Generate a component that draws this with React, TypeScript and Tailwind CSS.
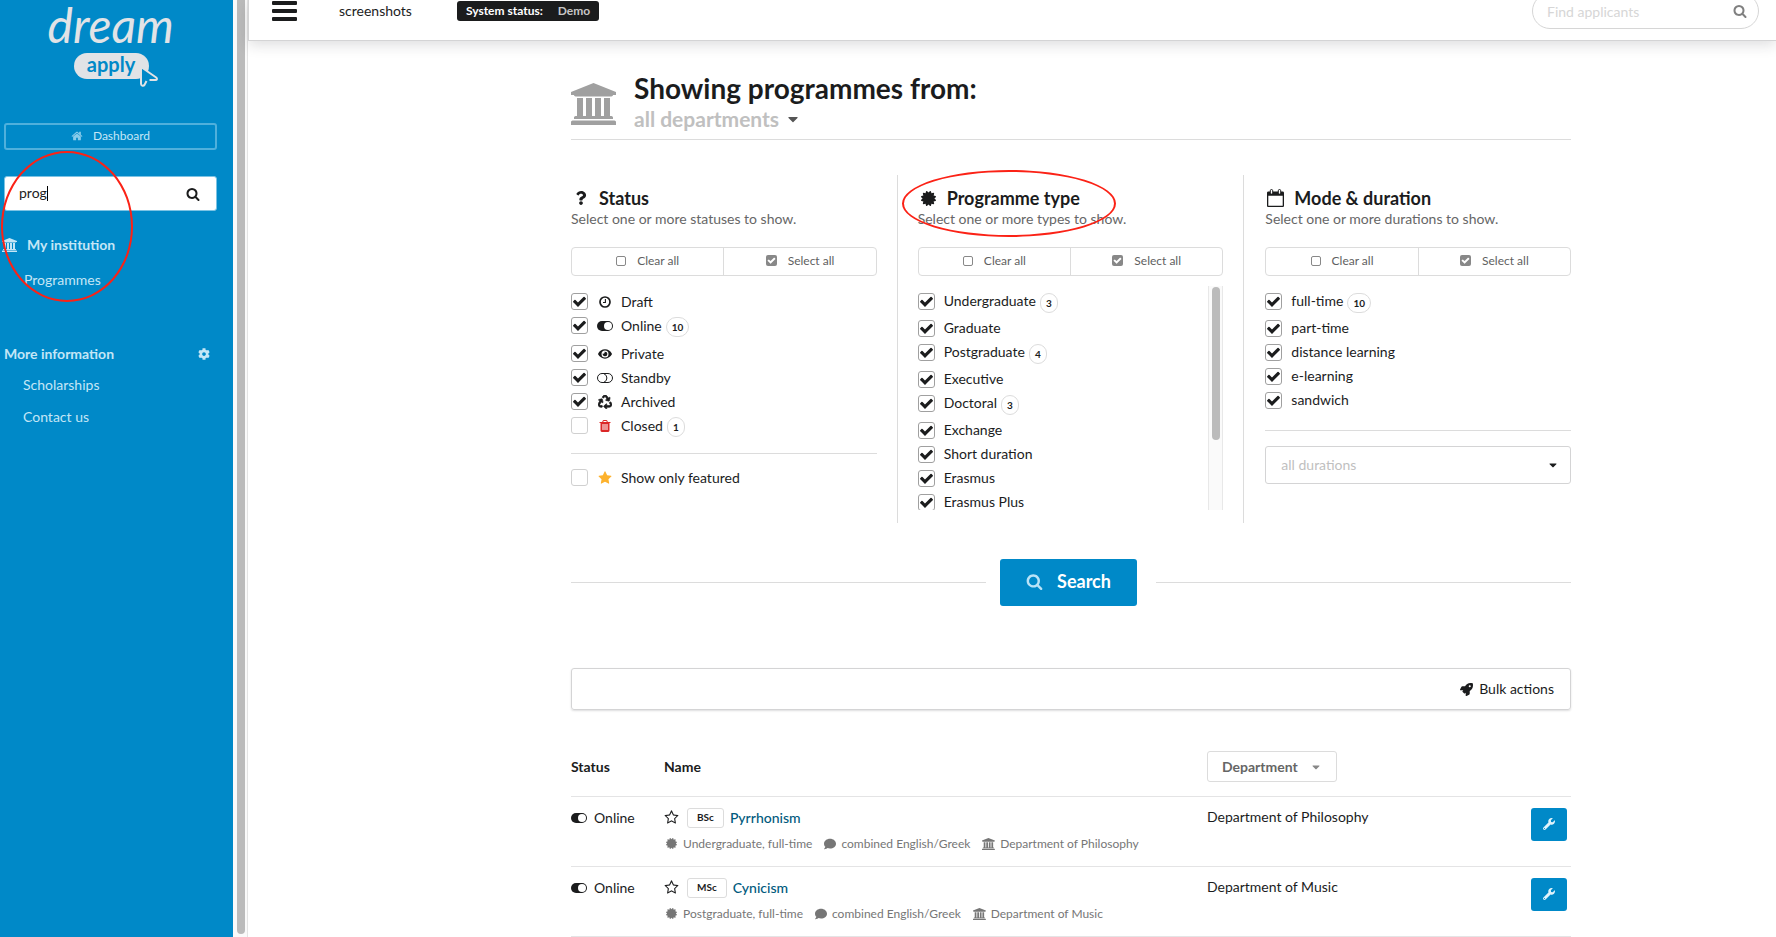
import type { ReactNode } from 'react'
import {
  FaCaretDown,
  FaCertificate,
  FaCog,
  FaComment,
  FaEye,
  FaQuestion,
  FaRecycle,
  FaRocket,
  FaWrench,
} from 'react-icons/fa'

interface IconProps {
  className?: string
}

interface Option {
  label: string
  checked: boolean
  count?: number
  icon?: ReactNode
}

function SearchIcon({ className }: IconProps) {
  return (
    <svg viewBox="0 0 1792 1792" fill="currentColor" className={className} aria-hidden="true">
      <path d="M1216 832q0-185-131.5-316.5t-316.5-131.5-316.5 131.5-131.5 316.5 131.5 316.5 316.5 131.5 316.5-131.5 131.5-316.5zm512 832q0 52-38 90t-90 38q-54 0-90-38l-343-342q-179 124-399 124-143 0-273.5-55.5t-225-150-150-225-55.5-273.5 55.5-273.5 150-225 225-150 273.5-55.5 273.5 55.5 225 150 150 225 55.5 273.5q0 220-124 399l343 343q37 37 37 90z" />
    </svg>
  )
}

function CheckIcon({ className }: IconProps) {
  return (
    <svg viewBox="0 0 1792 1792" fill="currentColor" className={className} aria-hidden="true">
      <path d="M1671 566q0 40-28 68l-724 724-136 136q-28 28-68 28t-68-28l-136-136-362-362q-28-28-28-68t28-68l136-136q28-28 68-28t68 28l294 295 656-657q28-28 68-28t68 28l136 136q28 28 28 68z" />
    </svg>
  )
}

function UniversityIcon({ className }: IconProps) {
  return (
    <svg viewBox="0 0 1920 1792" fill="currentColor" className={className} aria-hidden="true">
      <path d="M960 0l960 384v128h-128q0 26-20.5 45t-48.5 19h-1526q-28 0-48.5-19t-20.5-45h-128v-128zm-704 640h256v768h128v-768h256v768h128v-768h256v768h128v-768h256v768h59q28 0 48.5 19t20.5 45v64h-1664v-64q0-26 20.5-45t48.5-19h59v-768zm1595 960q28 0 48.5 19t20.5 45v128h-1920v-128q0-26 20.5-45t48.5-19h1782z" />
    </svg>
  )
}

function HomeIcon({ className }: IconProps) {
  return (
    <svg viewBox="0 0 1792 1792" fill="currentColor" className={className} aria-hidden="true">
      <path d="M1472 992v480q0 26-19 45t-45 19h-384v-384h-256v384h-384q-26 0-45-19t-19-45v-480q0-1 .5-3t.5-3l575-474 575 474q1 2 1 6zm223-69l-62 74q-8 9-21 11h-3q-13 0-21-7l-692-577-692 577q-12 8-24 7-13-2-21-11l-62-74q-8-10-7-23.5t11-21.5l719-599q32-26 76-26t76 26l244 204v-195q0-14 9-23t23-9h192q14 0 23 9t9 23v408l219 182q10 8 11 21.5t-7 23.5z" />
    </svg>
  )
}

function StarIcon({ className }: IconProps) {
  return (
    <svg viewBox="0 0 1792 1792" fill="currentColor" className={className} aria-hidden="true">
      <path d="M1728 647q0 22-26 48l-363 354 86 500q1 7 1 20 0 21-10.5 35.5t-30.5 14.5q-19 0-40-12l-449-236-449 236q-22 12-40 12-21 0-31.5-14.5t-10.5-35.5q0-6 2-20l86-500-364-354q-25-27-25-48 0-37 56-46l502-73 225-455q19-41 49-41t49 41l225 455 502 73q56 9 56 46z" />
    </svg>
  )
}

function StarOutlineIcon({ className }: IconProps) {
  return (
    <svg viewBox="0 0 1792 1792" fill="currentColor" className={className} aria-hidden="true">
      <path d="M1201 1004l306-297-422-62-189-382-189 382-422 62 306 297-73 421 378-199 377 199zm527-357q0 22-26 48l-363 354 86 500q1 7 1 20 0 50-41 50-19 0-40-12l-449-236-449 236q-22 12-40 12-21 0-31.5-14.5t-10.5-35.5q0-6 2-20l86-500-364-354q-25-27-25-48 0-37 56-46l502-73 225-455q19-41 49-41t49 41l225 455 502 73q56 9 56 46z" />
    </svg>
  )
}

function TrashIcon({ className }: IconProps) {
  return (
    <svg viewBox="0 0 1792 1792" fill="currentColor" className={className} aria-hidden="true">
      <path d="M704 1376v-704q0-14-9-23t-23-9h-64q-14 0-23 9t-9 23v704q0 14 9 23t23 9h64q14 0 23-9t9-23zm256 0v-704q0-14-9-23t-23-9h-64q-14 0-23 9t-9 23v704q0 14 9 23t23 9h64q14 0 23-9t9-23zm256 0v-704q0-14-9-23t-23-9h-64q-14 0-23 9t-9 23v704q0 14 9 23t23 9h64q14 0 23-9t9-23zm-544-992h448l-48-117q-7-9-17-11h-317q-10 2-17 11zm928 32v64q0 14-9 23t-23 9h-96v948q0 83-47 143.5t-113 60.5h-832q-66 0-113-58.5t-47-141.5v-952h-96q-14 0-23-9t-9-23v-64q0-14 9-23t23-9h309l70-167q15-37 54-63t79-26h320q40 0 79 26t54 63l70 167h309q14 0 23 9t9 23z" />
    </svg>
  )
}

function ClockIcon({ className }: IconProps) {
  return (
    <svg viewBox="0 0 12 12" fill="none" stroke="currentColor" className={className} aria-hidden="true">
      <circle cx="6" cy="6" r="5" strokeWidth="1.7" />
      <path d="M6.4 3v3.5H4" strokeWidth="1.1" />
    </svg>
  )
}

function ToggleOnIcon({ className }: IconProps) {
  return (
    <svg viewBox="0 0 16 10" className={className} aria-hidden="true">
      <rect width="16" height="10" rx="5" fill="currentColor" />
      <circle cx="11" cy="5" r="4" fill="white" />
    </svg>
  )
}

function ToggleOffIcon({ className }: IconProps) {
  return (
    <svg viewBox="0 0 16 10" fill="none" stroke="currentColor" className={className} aria-hidden="true">
      <rect x=".5" y=".5" width="15" height="9" rx="4.5" />
      <path d="M7 .8a4.5 4.5 0 0 1 0 8.4" />
    </svg>
  )
}

function CalendarIcon({ className }: IconProps) {
  return (
    <svg viewBox="0 0 17 18" className={className} aria-hidden="true">
      <path
        fill="currentColor"
        fillRule="evenodd"
        d="M1.3 2.6h14.4c.7 0 1.3.6 1.3 1.3v12.8c0 .7-.6 1.3-1.3 1.3H1.3C.6 18 0 17.4 0 16.7V3.9c0-.7.6-1.3 1.3-1.3zM1.3 6.8v9.9h14.4V6.8z"
      />
      <rect x="3.3" y=".5" width="2.4" height="4.6" rx="1.2" fill="white" stroke="currentColor" />
      <rect x="11.3" y=".5" width="2.4" height="4.6" rx="1.2" fill="white" stroke="currentColor" />
    </svg>
  )
}

const statuses: Option[] = [
  { label: 'Draft', checked: true, icon: <ClockIcon className="size-3" /> },
  { label: 'Online', checked: true, count: 10, icon: <ToggleOnIcon className="w-4" /> },
  { label: 'Private', checked: true, icon: <FaEye className="size-3.5" /> },
  { label: 'Standby', checked: true, icon: <ToggleOffIcon className="w-4" /> },
  { label: 'Archived', checked: true, icon: <FaRecycle className="size-3.5 stroke-current stroke-[24px]" /> },
  { label: 'Closed', checked: false, count: 1, icon: <TrashIcon className="size-3.5 text-[#db2828]" /> },
]

const programmeTypes: Option[] = [
  { label: 'Undergraduate', checked: true, count: 3 },
  { label: 'Graduate', checked: true },
  { label: 'Postgraduate', checked: true, count: 4 },
  { label: 'Executive', checked: true },
  { label: 'Doctoral', checked: true, count: 3 },
  { label: 'Exchange', checked: true },
  { label: 'Short duration', checked: true },
  { label: 'Erasmus', checked: true },
  { label: 'Erasmus Plus', checked: true },
]

const modes: Option[] = [
  { label: 'full-time', checked: true, count: 10 },
  { label: 'part-time', checked: true },
  { label: 'distance learning', checked: true },
  { label: 'e-learning', checked: true },
  { label: 'sandwich', checked: true },
]

const programmes = [
  {
    name: 'Pyrrhonism',
    degree: 'BSc',
    type: 'Undergraduate, full-time',
    language: 'combined English/Greek',
    department: 'Department of Philosophy',
  },
  {
    name: 'Cynicism',
    degree: 'MSc',
    type: 'Postgraduate, full-time',
    language: 'combined English/Greek',
    department: 'Department of Music',
  },
]

function Checkbox({ label, checked, count, icon }: Option) {
  const badgeHeight = icon ? 'h-7' : 'h-[27px]'

  return (
    <label
      className={`flex items-start text-sm ${icon ? 'leading-[17px]' : 'leading-[15px]'} ${
        count ? badgeHeight : 'h-6'
      }`}
    >
      <span className="relative mr-[9px] size-[17px] shrink-0">
        <input
          type="checkbox"
          defaultChecked={checked}
          className="peer block size-[17px] appearance-none rounded-[3px] border border-[#d0d0d0] bg-white checked:border-[#a0a0a0]"
        />
        <CheckIcon className="pointer-events-none absolute inset-0 m-auto hidden size-[15px] peer-checked:block" />
      </span>
      {icon && <span className="mr-2 flex h-[17px] w-4 shrink-0 items-center justify-center">{icon}</span>}
      <span>{label}</span>
      {count && (
        <span className="ml-1 flex h-5 min-w-[18px] items-center justify-center rounded-full border border-[#dcdcdc] px-[5px] text-[10px] font-bold">
          {count}
        </span>
      )}
    </label>
  )
}

function ColumnHeader({ icon, title, text }: { icon: ReactNode; title: string; text: string }) {
  return (
    <>
      <h2 className="flex items-center gap-2 text-lg leading-[22px] font-bold">
        {icon}
        {title}
      </h2>
      <p className="text-sm leading-5 text-[#666]">{text}</p>
      <div className="mt-[18px] flex h-[29px] rounded-sm border border-[#dcdcdc] text-xs text-[#5f5f5f]">
        <button
          type="button"
          className="flex flex-1 items-center justify-center gap-[11px] border-r border-[#dcdcdc] pb-0.5"
        >
          <span className="size-[10px] rounded-[2px] border border-[#888]" />
          Clear all
        </button>
        <button type="button" className="flex flex-1 items-center justify-center gap-[11px] pb-0.5">
          <span className="flex size-[11px] items-center justify-center rounded-[2px] bg-[#888] text-white">
            <CheckIcon className="size-[9px]" />
          </span>
          Select all
        </button>
      </div>
    </>
  )
}

function Sidebar() {
  return (
    <aside className="relative w-[233px] shrink-0 bg-[#0089c8] pr-4 pl-1 text-sm text-[#c4e6f6]">
      {/* Logo */}
      <div className="relative mx-auto h-[123px] w-[126px] text-[#e1e3e6]">
        <p className="text-center text-5xl leading-[50px] italic">dream</p>
        <p className="mt-[3px] ml-[26px] flex h-[26px] w-[75px] items-center justify-center rounded-full bg-[#e1e3e6] pb-1 text-xl leading-5 font-bold text-[#0089c8]">
          apply
        </p>
        <svg viewBox="0 0 20 23" className="absolute top-[65px] left-[91px] w-5" aria-hidden="true">
          <path d="M2 2l15 10c1.5 1 1 2.5-.5 2.5H10L6 19.5C5 21.5 2.5 21 2.2 19z" fill="#0089c8" />
          <path
            d="M10.5 15H16.5c1.6 0 2-1.5.7-2.5L2 2v17c.2 2 2.5 2.5 3.5.9L7.5 16"
            fill="none"
            stroke="#e1e3e6"
            strokeWidth="2"
            strokeLinejoin="round"
          />
        </svg>
      </div>

      <a
        href="#dashboard"
        className="flex h-[27px] items-center justify-center gap-2.5 rounded-[3px] border-2 border-[#4fb0dc] pb-0.5 text-xs"
      >
        <HomeIcon className="size-3 text-[#8accea]" />
        Dashboard
      </a>

      <div className="relative mt-[26px]">
        <input
          type="text"
          aria-label="Search menu"
          defaultValue="prog"
          className="block h-[35px] w-full rounded-[3px] border border-[#7cc3e4] bg-white px-3.5 pb-0.5 text-sm text-[#222] outline-none"
        />
        <span className="absolute top-2.5 left-[43px] h-[15px] w-px bg-black" />
        <SearchIcon className="absolute top-[11px] right-[17px] size-3.5 text-[#1b1c1d]" />
      </div>

      {/* Menu */}
      <nav>
        <p className="mt-6 -ml-0.5 flex h-5 items-center gap-2.5 font-bold">
          <UniversityIcon className="h-3.5" />
          My institution
        </p>
        <a href="#programmes" className="mt-[15px] ml-5 block leading-5">
          Programmes
        </a>
        <p className="mt-[54px] flex h-5 items-center justify-between pr-[7px] font-bold">
          More information
          <FaCog className="size-3" />
        </p>
        <a href="#scholarships" className="mt-[11px] ml-[19px] block leading-5">
          Scholarships
        </a>
        <a href="#contact" className="mt-3 ml-[19px] block leading-5">
          Contact us
        </a>
      </nav>

      <span className="pointer-events-none absolute top-[151px] left-[1px] h-[151px] w-[132px] rounded-[50%] border-2 border-[#fb2216]" />
    </aside>
  )
}

function Header() {
  return (
    <header className="flex h-[41px] items-center border-b border-l border-[#d4d4d5] bg-white pr-[17px] pb-[18px] pl-[23px] shadow-[0_4px_14px_rgba(34,36,38,0.15)]">
      <button type="button" aria-label="Toggle menu" className="flex w-[25px] flex-col gap-1">
        <span className="h-1 w-full rounded-[1px] bg-[#1b1c1d]" />
        <span className="h-1 w-full rounded-[1px] bg-[#1b1c1d]" />
        <span className="h-1 w-full rounded-[1px] bg-[#1b1c1d]" />
      </button>
      <span className="ml-[42px] text-sm">screenshots</span>
      <p className="ml-[45px] flex h-5 items-center gap-[15px] rounded-[3px] bg-[#1b1c1d] px-[9px] text-xs font-bold text-white">
        System status: <span className="text-[#c6c6c6]">Demo</span>
      </p>
      <div className="relative ml-auto">
        <input
          type="search"
          aria-label="Find applicants"
          placeholder="Find applicants"
          className="block h-9 w-[227px] rounded-full border border-[#d6d6d6] px-3.5 text-sm placeholder:text-[#d6d6d6]"
        />
        <SearchIcon className="absolute top-[11px] right-3 size-3.5 text-[#808080]" />
      </div>
    </header>
  )
}

function Filters() {
  return (
    <form className="mt-[35px]" onSubmit={(e) => e.preventDefault()}>
      <div className="flex">
        <section className="min-w-0 flex-1 pt-3">
          <ColumnHeader
            icon={<FaQuestion className="mx-[3px] size-3.5" />}
            title="Status"
            text="Select one or more statuses to show."
          />
          <div className="mt-[17px]">
            {statuses.map((item) => (
              <Checkbox key={item.label} {...item} />
            ))}
          </div>
          <hr className="mt-2 mb-[15px] border-[#dcdcdc]" />
          <Checkbox label="Show only featured" checked={false} icon={<StarIcon className="size-3.5 text-[#fdb22d]" />} />
        </section>

        <div className="mx-5 w-px bg-[#dcdcdc]" />

        <section className="relative min-w-0 flex-1 pt-3">
          <ColumnHeader
            icon={<FaCertificate className="mr-[3px] ml-[3px] size-[15px]" />}
            title="Programme type"
            text="Select one or more types to show."
          />
          <div className="mt-2.5 mb-[13px] flex h-[224px] justify-between overflow-hidden">
            <div className="pt-[7px]">
              {programmeTypes.map((item) => (
                <Checkbox key={item.label} {...item} />
              ))}
            </div>
            <div className="w-[15px] border-x border-[#e8e8e8] bg-[#fafafa] px-[3px] pt-px">
              <div className="h-[153px] w-2 rounded-full bg-[#bbb]" />
            </div>
          </div>
          <span className="pointer-events-none absolute -top-[5px] -left-4 h-[67px] w-[214px] rounded-[50%] border-2 border-[#fb2216]" />
        </section>

        <div className="mr-[21px] ml-5 w-px bg-[#dcdcdc]" />

        <section className="min-w-0 flex-1 pt-3">
          <ColumnHeader
            icon={<CalendarIcon className="mr-0.5 ml-0.5 h-[18px]" />}
            title="Mode & duration"
            text="Select one or more durations to show."
          />
          <div className="mt-[17px]">
            {modes.map((item) => (
              <Checkbox key={item.label} {...item} />
            ))}
          </div>
          <hr className="mt-3.5 mb-[15px] border-[#dcdcdc]" />
          <div className="relative">
            <select
              aria-label="Duration"
              className="block h-[38px] w-full appearance-none rounded-[3px] border border-[#d4d4d5] bg-white px-[15px] text-sm text-[#bfbfbf]"
            >
              <option>all durations</option>
            </select>
            <FaCaretDown className="pointer-events-none absolute top-[13px] right-3 size-3" />
          </div>
        </section>
      </div>

      <div className="mt-9 flex items-center">
        <span className="h-px flex-1 bg-[#dcdcdc]" />
        <button
          type="submit"
          className="mr-[19px] ml-3.5 flex h-[47px] w-[137px] items-center justify-center gap-3.5 rounded-[3px] bg-[#0089c8] pb-[3px] text-lg font-bold text-white"
        >
          <SearchIcon className="size-[17px] text-[#b9e3f7]" />
          Search
        </button>
        <span className="h-px flex-1 bg-[#dcdcdc]" />
      </div>
    </form>
  )
}

function ProgrammeTable() {
  return (
    <table className="mt-7 w-full table-fixed text-left text-sm">
      <colgroup>
        <col className="w-[93px]" />
        <col />
        <col className="w-[300px]" />
        <col className="w-[64px]" />
      </colgroup>
      <thead>
        <tr className="h-[58px] border-b border-[#e4e4e5]">
          <th className="font-bold">Status</th>
          <th className="font-bold">Name</th>
          <th colSpan={2}>
            <button
              type="button"
              className="flex h-[31px] items-center gap-3 rounded-[3px] border border-[#dcdcdc] px-3.5 font-bold text-[#666]"
            >
              Department
              <FaCaretDown className="size-3 text-[#888]" />
            </button>
          </th>
        </tr>
      </thead>
      <tbody>
        {programmes.map((item) => (
          <tr key={item.name} className="h-[70px] border-b border-[#e4e4e5] align-top">
            <td className="pt-[11px]">
              <span className="flex h-5 items-center gap-[7px]">
                <ToggleOnIcon className="w-4" />
                Online
              </span>
            </td>
            <td className="pt-[11px]">
              <div className="flex h-5 items-center">
                <button type="button" aria-label="Feature programme">
                  <StarOutlineIcon className="size-[15px]" />
                </button>
                <span className="ml-2 flex h-5 items-center rounded-[3px] border border-[#dcdcdc] px-[9px] text-[10px] font-bold">
                  {item.degree}
                </span>
                <a href="#programme" className="ml-1.5 font-medium text-[#005a7d]">
                  {item.name}
                </a>
              </div>
              <div className="mt-2 flex h-4 items-center gap-3 text-xs text-[#767676]">
                <span className="flex items-center gap-1.5 pl-0.5">
                  <FaCertificate className="size-[11px]" />
                  {item.type}
                </span>
                <span className="flex items-center gap-[5px]">
                  <FaComment className="size-3" />
                  {item.language}
                </span>
                <span className="flex items-center gap-[5px]">
                  <UniversityIcon className="h-3" />
                  {item.department}
                </span>
              </div>
            </td>
            <td className="pt-2.5 leading-5">{item.department}</td>
            <td className="pt-[11px] pr-1">
              <button
                type="button"
                aria-label="Manage programme"
                className="ml-auto flex h-[33px] w-9 items-center justify-center rounded-[3px] bg-[#0089c8] text-[#e0f3fb]"
              >
                <FaWrench className="size-3" />
              </button>
            </td>
          </tr>
        ))}
      </tbody>
    </table>
  )
}

export default function App() {
  return (
    <div className="flex h-screen overflow-hidden bg-white font-['Lato',sans-serif] text-[#1b1c1d]">
      <Sidebar />

      {/* Sidebar scroll track */}
      <div className="flex w-[15px] shrink-0 border-r border-[#e4e4e4] bg-[#fafafa] pb-[3px] pl-1">
        <div className="w-2 rounded-b-full bg-[#bbb]" />
      </div>

      <div className="min-w-0 flex-1">
        <Header />
        <main className="pr-[205px] pl-[323px]">
          <div className="flex h-[99px] items-start border-b border-[#dcdcdc] pt-[31px]">
            <UniversityIcon className="mt-[11px] h-[42px] text-[#a0a0a0]" />
            <div className="ml-[18px]">
              <h1 className="text-[28px] leading-8 font-bold">Showing programmes from:</h1>
              <button
                type="button"
                className="flex items-center gap-1.5 text-[21px] leading-[29px] font-bold text-[#c0c0c0]"
              >
                all departments
                <FaCaretDown className="size-4 text-[#555]" />
              </button>
            </div>
          </div>

          <Filters />

          <div className="mt-[62px] flex h-[42px] items-center justify-end rounded-[3px] border border-[#d4d4d5] pr-4 shadow-[0_1px_2px_rgba(34,36,38,0.15)]">
            <button type="button" className="flex items-center gap-1.5 text-sm">
              <FaRocket className="size-[13px]" />
              Bulk actions
            </button>
          </div>

          <ProgrammeTable />
        </main>
      </div>
    </div>
  )
}
